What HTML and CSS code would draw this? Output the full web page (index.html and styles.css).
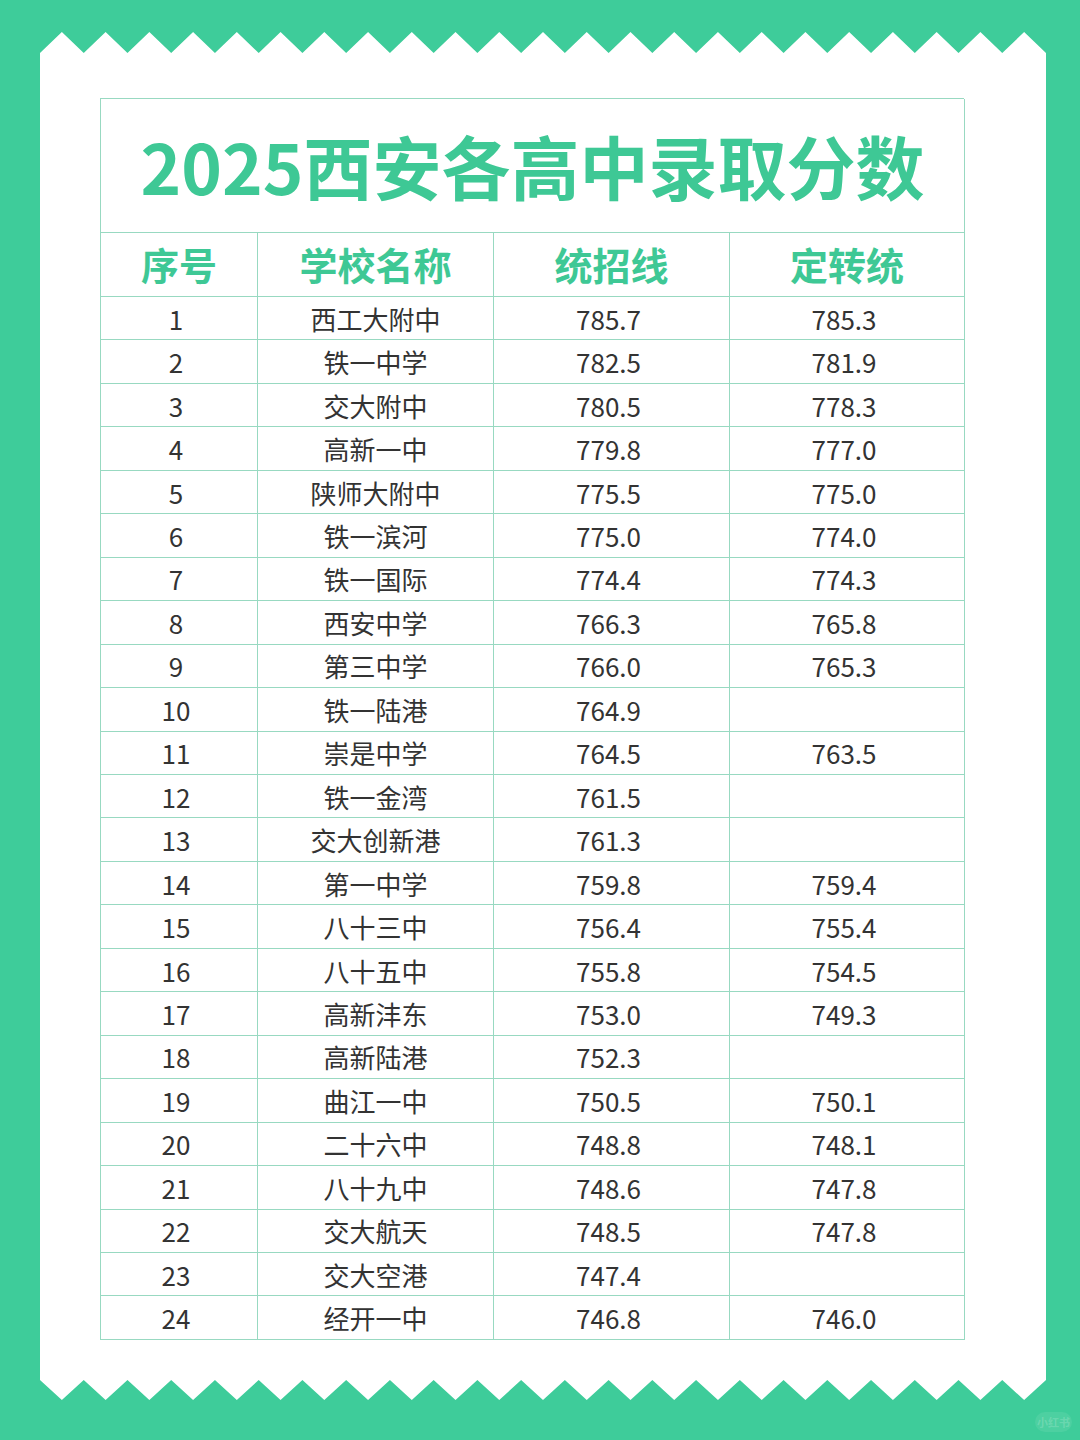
FILE: index.html
```html
<!DOCTYPE html>
<html lang="zh-CN">
<head>
<meta charset="utf-8">
<title>2025西安各高中录取分数</title>
<link rel="stylesheet" href="styles.css">
</head>
<body>
<div class="page">
  <div class="card">
    <div class="grid">
      <div class="title">2025西安各高中录取分数</div>
      <div class="hd">序号</div><div class="hd">学校名称</div><div class="hd">统招线</div><div class="hd">定转统</div>
      <div class="c">1</div><div class="c">西工大附中</div><div class="c">785.7</div><div class="c">785.3</div>
      <div class="c">2</div><div class="c">铁一中学</div><div class="c">782.5</div><div class="c">781.9</div>
      <div class="c">3</div><div class="c">交大附中</div><div class="c">780.5</div><div class="c">778.3</div>
      <div class="c">4</div><div class="c">高新一中</div><div class="c">779.8</div><div class="c">777.0</div>
      <div class="c">5</div><div class="c">陕师大附中</div><div class="c">775.5</div><div class="c">775.0</div>
      <div class="c">6</div><div class="c">铁一滨河</div><div class="c">775.0</div><div class="c">774.0</div>
      <div class="c">7</div><div class="c">铁一国际</div><div class="c">774.4</div><div class="c">774.3</div>
      <div class="c">8</div><div class="c">西安中学</div><div class="c">766.3</div><div class="c">765.8</div>
      <div class="c">9</div><div class="c">第三中学</div><div class="c">766.0</div><div class="c">765.3</div>
      <div class="c">10</div><div class="c">铁一陆港</div><div class="c">764.9</div><div class="c"></div>
      <div class="c">11</div><div class="c">崇是中学</div><div class="c">764.5</div><div class="c">763.5</div>
      <div class="c">12</div><div class="c">铁一金湾</div><div class="c">761.5</div><div class="c"></div>
      <div class="c">13</div><div class="c">交大创新港</div><div class="c">761.3</div><div class="c"></div>
      <div class="c">14</div><div class="c">第一中学</div><div class="c">759.8</div><div class="c">759.4</div>
      <div class="c">15</div><div class="c">八十三中</div><div class="c">756.4</div><div class="c">755.4</div>
      <div class="c">16</div><div class="c">八十五中</div><div class="c">755.8</div><div class="c">754.5</div>
      <div class="c">17</div><div class="c">高新沣东</div><div class="c">753.0</div><div class="c">749.3</div>
      <div class="c">18</div><div class="c">高新陆港</div><div class="c">752.3</div><div class="c"></div>
      <div class="c">19</div><div class="c">曲江一中</div><div class="c">750.5</div><div class="c">750.1</div>
      <div class="c">20</div><div class="c">二十六中</div><div class="c">748.8</div><div class="c">748.1</div>
      <div class="c">21</div><div class="c">八十九中</div><div class="c">748.6</div><div class="c">747.8</div>
      <div class="c">22</div><div class="c">交大航天</div><div class="c">748.5</div><div class="c">747.8</div>
      <div class="c">23</div><div class="c">交大空港</div><div class="c">747.4</div><div class="c"></div>
      <div class="c">24</div><div class="c">经开一中</div><div class="c">746.8</div><div class="c">746.0</div>
    </div>
  </div>
  <div class="mark">小红书</div>
</div>
</body>
</html>
```

FILE: styles.css
```css
html, body {
  margin: 0;
  padding: 0;
}
body {
  background: #3ecc9a;
  font-family: "Noto Sans CJK SC", "Noto Sans", sans-serif;
}
.page {
  position: relative;
  width: 1080px;
  height: 1440px;
  padding: 32px 0 0 40px;
  box-sizing: border-box;
}
.card {
  width: 1006px;
  height: 1368px;
  background: #ffffff;
  box-sizing: border-box;
  padding: 66px 0 0 60px;
  clip-path: polygon(
    0 21px, 2.174% 0, 4.348% 21px, 6.522% 0, 8.696% 21px, 10.870% 0, 13.043% 21px, 15.217% 0,
    17.391% 21px, 19.565% 0, 21.739% 21px, 23.913% 0, 26.087% 21px, 28.261% 0, 30.435% 21px,
    32.609% 0, 34.783% 21px, 36.957% 0, 39.130% 21px, 41.304% 0, 43.478% 21px, 45.652% 0,
    47.826% 21px, 50% 0, 52.174% 21px, 54.348% 0, 56.522% 21px, 58.696% 0, 60.870% 21px,
    63.043% 0, 65.217% 21px, 67.391% 0, 69.565% 21px, 71.739% 0, 73.913% 21px, 76.087% 0,
    78.261% 21px, 80.435% 0, 82.609% 21px, 84.783% 0, 86.957% 21px, 89.130% 0, 91.304% 21px,
    93.478% 0, 95.652% 21px, 97.826% 0, 100% 21px,
    100% calc(100% - 20px), 97.826% 100%, 95.652% calc(100% - 20px), 93.478% 100%,
    91.304% calc(100% - 20px), 89.130% 100%, 86.957% calc(100% - 20px), 84.783% 100%,
    82.609% calc(100% - 20px), 80.435% 100%, 78.261% calc(100% - 20px), 76.087% 100%,
    73.913% calc(100% - 20px), 71.739% 100%, 69.565% calc(100% - 20px), 67.391% 100%,
    65.217% calc(100% - 20px), 63.043% 100%, 60.870% calc(100% - 20px), 58.696% 100%,
    56.522% calc(100% - 20px), 54.348% 100%, 52.174% calc(100% - 20px), 50% 100%,
    47.826% calc(100% - 20px), 45.652% 100%, 43.478% calc(100% - 20px), 41.304% 100%,
    39.130% calc(100% - 20px), 36.957% 100%, 34.783% calc(100% - 20px), 32.609% 100%,
    30.435% calc(100% - 20px), 28.261% 100%, 26.087% calc(100% - 20px), 23.913% 100%,
    21.739% calc(100% - 20px), 19.565% 100%, 17.391% calc(100% - 20px), 15.217% 100%,
    13.043% calc(100% - 20px), 10.870% 100%, 8.696% calc(100% - 20px), 6.522% 100%,
    4.348% calc(100% - 20px), 2.174% 100%, 0 calc(100% - 20px)
  );
}
.grid {
  width: 864px;
  display: grid;
  grid-template-columns: 157px 236px 236px 235px;
  grid-template-rows: 134px 64px repeat(24, 43.46px);
  border-top: 1.5px solid #98d9c1;
  border-left: 1.5px solid #98d9c1;
  box-sizing: border-box;
}
.grid > div {
  border-right: 1.5px solid #98d9c1;
  border-bottom: 1.5px solid #98d9c1;
  display: flex;
  align-items: center;
  justify-content: center;
  box-sizing: border-box;
}
.title {
  grid-column: 1 / -1;
  color: #3ec895;
  font-size: 69px;
  font-weight: 700;
  letter-spacing: 0;
  padding-bottom: 2px;
}
.hd {
  color: #3ec895;
  font-size: 38px;
  font-weight: 700;
  padding-bottom: 2px;
}
.c {
  color: #333333;
  font-size: 26px;
  font-weight: 400;
  padding-right: 6px;
}
.grid > .c:nth-child(4n+3) {
  padding-right: 0;
}
.mark {
  position: absolute;
  left: 1035px;
  top: 1412px;
  width: 37px;
  height: 20px;
  border-radius: 10px;
  background: rgba(255, 255, 255, 0.08);
  color: rgba(255, 255, 255, 0.18);
  font-size: 11px;
  line-height: 20px;
  text-align: center;
  font-weight: 700;
}
```
